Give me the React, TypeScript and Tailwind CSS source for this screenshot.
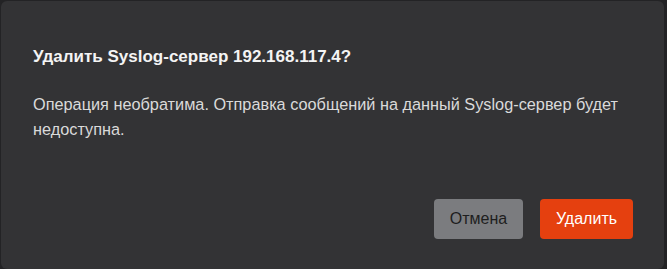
export default function App() {
  return (
    <div className="w-[667px] h-[269px] bg-[#232325] pt-px pl-px font-['Liberation_Sans',Arial,sans-serif]">
      <div className="w-[663px] h-[268px] bg-[#333335] rounded-md flex flex-col pl-[32px] pr-[31px]">
        <h2 className="mt-[44px] text-[17px] leading-[24px] font-bold text-[#f4f4f4]">
          Удалить Syslog-сервер 192.168.117.4?
        </h2>
        <p className="mt-[23px] text-[16.3px] leading-[25px] text-[#dadada]">
          Операция необратима. Отправка сообщений на данный Syslog-сервер будет недоступна.
        </p>
        <div className="mt-auto mb-[30px] flex justify-end gap-[17px]">
          <button className="w-[89px] h-[40px] rounded bg-[#7b7c7f] text-[#1e1e1e] text-[16px]">
            Отмена
          </button>
          <button className="w-[93px] h-[40px] rounded bg-[#e5400f] text-white text-[16px]">
            Удалить
          </button>
        </div>
      </div>
    </div>
  );
}
